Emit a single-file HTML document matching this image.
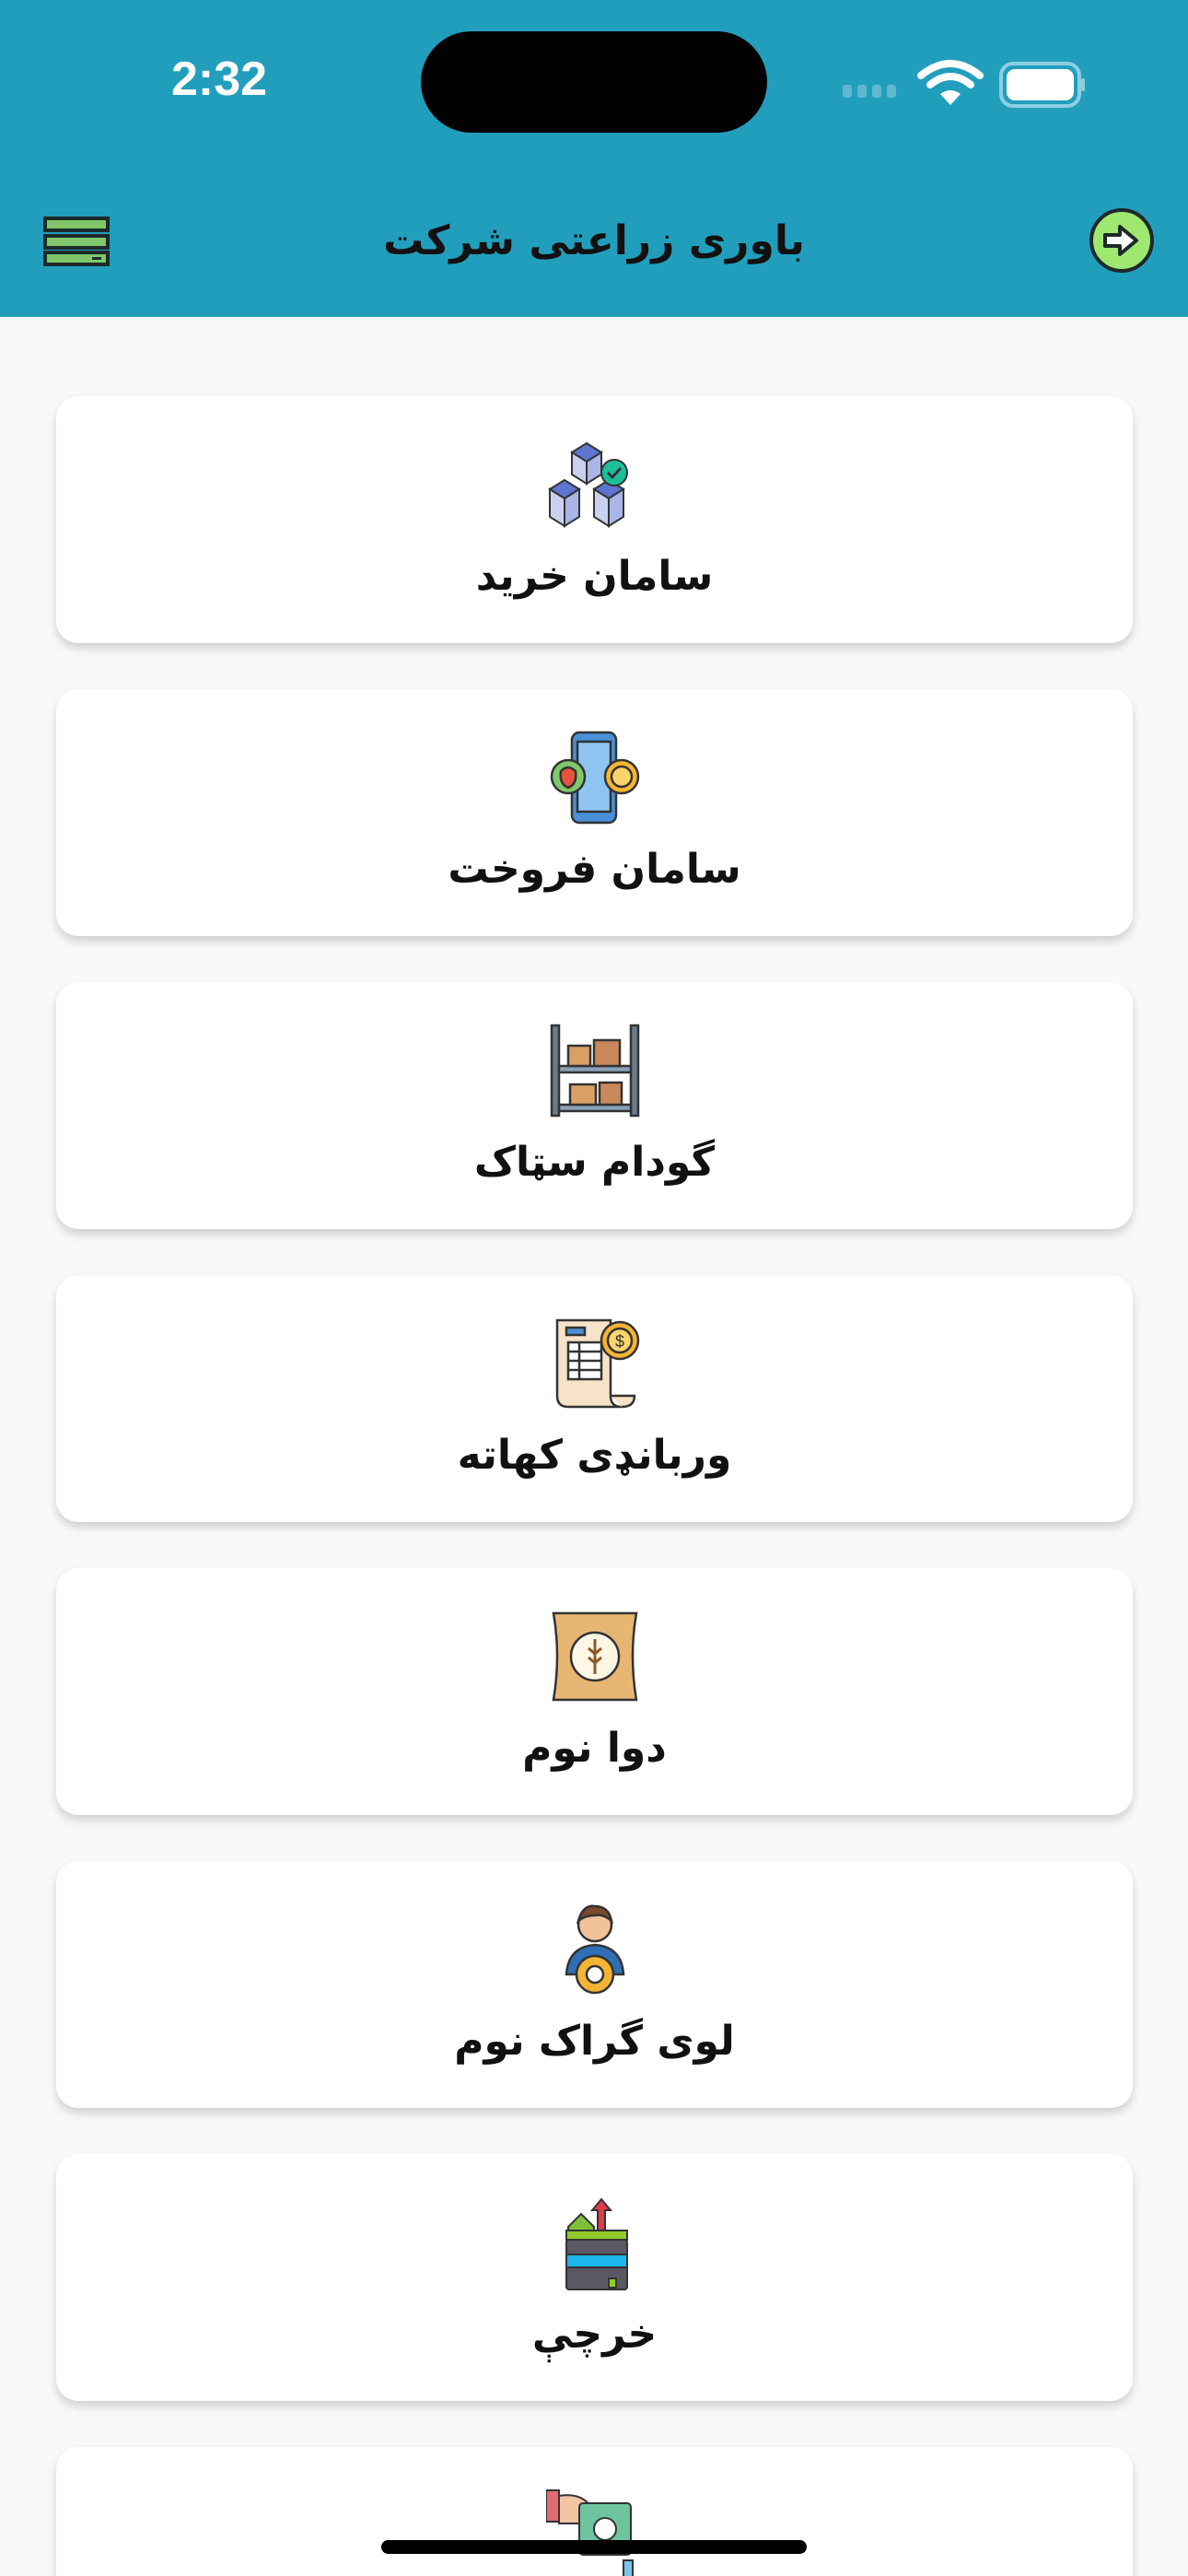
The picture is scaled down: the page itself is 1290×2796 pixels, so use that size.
<!DOCTYPE html>
<html style="width:1290px;height:2796px;overflow:hidden"><head><meta charset="utf-8">
<style>
*{margin:0;padding:0;box-sizing:border-box}
body{width:1290px;height:2796px;overflow:hidden;background:#f8f9fb;font-family:"DejaVu Sans","Liberation Sans",sans-serif;position:relative}
.hdr{position:absolute;left:0;top:0;width:1290px;height:344px;background:#229ebd}
.time{position:absolute;left:186px;top:56px;font-family:"Liberation Sans",sans-serif;font-weight:bold;font-size:52px;color:#fff}
.island{position:absolute;left:457px;top:34px;width:376px;height:110px;border-radius:55px;background:#000}
.title{position:absolute;left:0;width:1290px;top:236px;text-align:center;font-size:44px;font-weight:bold;color:#111;direction:rtl}
.card{position:absolute;left:61px;width:1169px;height:268px;background:#fff;border-radius:24px;box-shadow:0 6px 10px rgba(0,0,0,.16);overflow:hidden}
.card svg{position:absolute;left:532px;top:43px}
.card .lbl{position:absolute;left:0;right:0;top:170px;text-align:center;font-size:44px;font-weight:bold;color:#111;direction:rtl}
.home{position:absolute;left:414px;top:2757px;width:462px;height:15px;border-radius:8px;background:#000}
</style></head><body>
<div class="hdr">
<div class="time">2:32</div>
<div class="island"></div>
<svg style="position:absolute;left:910px;top:60px" width="270" height="60" viewBox="0 0 270 60">
<g fill="#5fb8d0"><rect x="5" y="32" width="10" height="14" rx="3"/><rect x="21" y="32" width="10" height="14" rx="3"/><rect x="37" y="32" width="10" height="14" rx="3"/><rect x="53" y="32" width="10" height="14" rx="3"/></g>
<g fill="none" stroke="#fff" stroke-width="8" stroke-linecap="round"><path d="M90 22 Q122 -4 154 22"/><path d="M100 32 Q122 14 144 32"/></g>
<path d="M111 42 Q122 34 133 42 L122 54Z" fill="#fff"/>
<rect x="177" y="9" width="85" height="46" rx="13" fill="none" stroke="#8ccfe0" stroke-width="4"/>
<rect x="183" y="15" width="73" height="34" rx="9" fill="#fff"/>
<rect x="264" y="25" width="4" height="14" rx="2" fill="#8ccfe0"/>
</svg>
<svg style="position:absolute;left:46px;top:234px" width="76" height="56" viewBox="0 0 76 56">
<g fill="#7fc76a" stroke="#1d2a2a" stroke-width="4"><rect x="3" y="3" width="68" height="13"/><rect x="3" y="22" width="68" height="13"/><rect x="3" y="40" width="68" height="13"/></g>
<rect x="54" y="45" width="10" height="3" fill="#1d2a2a"/>
</svg>
<div class="title">باوری زراعتی شرکت</div>
<svg style="position:absolute;left:1182px;top:224px" width="74" height="74" viewBox="0 0 74 74">
<circle cx="36" cy="37" r="33" fill="#9fe870" stroke="#1d2a2a" stroke-width="4"/>
<path d="M18 31 H34 V22 L52 37 L34 52 V43 H18Z" fill="#fff" stroke="#1d2a2a" stroke-width="4" stroke-linejoin="round"/>
</svg>
</div>

<div class="card" style="top:430px">
<svg width="106" height="106" viewBox="0 0 106 106"><g stroke="#333" stroke-width="2"><path d="M28 18 L44 8 L60 18 L44 28Z" fill="#5d74d2"/><path d="M28 18 V42 L44 52 V28Z" fill="#c9d0f0"/><path d="M60 18 V42 L44 52 V28Z" fill="#aab4e6"/><path d="M4 58 L20 48 L36 58 L20 68Z" fill="#5d74d2"/><path d="M4 58 V88 L20 98 V68Z" fill="#c9d0f0"/><path d="M36 58 V88 L20 98 V68Z" fill="#aab4e6"/><path d="M52 58 L68 48 L84 58 L68 68Z" fill="#5d74d2"/><path d="M52 58 V88 L68 98 V68Z" fill="#c9d0f0"/><path d="M84 58 V88 L68 98 V68Z" fill="#aab4e6"/><circle cx="74" cy="40" r="14" fill="#1bbf9a"/><path d="M67 40 L72 45 L81 35" fill="none" stroke-width="3"/></g></svg>
<div class="lbl">سامان خرید</div></div>

<div class="card" style="top:748px">
<svg width="106" height="106" viewBox="0 0 106 106"><g stroke="#333" stroke-width="2.5"><rect x="28" y="4" width="48" height="98" rx="8" fill="#4a90d9"/><rect x="34" y="14" width="36" height="76" fill="#8ec5f0"/><circle cx="24" cy="52" r="18" fill="#7fc96b"/><path d="M16 46 Q24 38 32 46 Q34 60 24 64 Q14 60 16 46Z" fill="#e5533d"/><circle cx="82" cy="52" r="18" fill="#f5b534"/><circle cx="82" cy="52" r="11" fill="#fcd46a"/></g></svg>
<div class="lbl">سامان فروخت</div></div>

<div class="card" style="top:1066px">
<svg width="106" height="106" viewBox="0 0 106 106"><g stroke="#333" stroke-width="2.5"><rect x="6" y="4" width="8" height="98" fill="#6b7b8c"/><rect x="92" y="4" width="8" height="98" fill="#6b7b8c"/><rect x="14" y="48" width="78" height="7" fill="#8aa0b6"/><rect x="14" y="90" width="78" height="7" fill="#8aa0b6"/><rect x="24" y="26" width="24" height="22" fill="#d9a066"/><rect x="52" y="20" width="28" height="28" fill="#c9895a"/><rect x="26" y="68" width="28" height="22" fill="#d9a066"/><rect x="58" y="66" width="24" height="24" fill="#c9895a"/></g></svg>
<div class="lbl">گودام سټاک</div></div>

<div class="card" style="top:1384px">
<svg width="106" height="106" viewBox="0 0 106 106"><g stroke="#333" stroke-width="2.5"><path d="M12 6 H70 V88 Q70 100 82 100 H24 Q12 100 12 88Z" fill="#f6e3c8"/><rect x="24" y="30" width="36" height="40" fill="#fff"/><path d="M24 40 H60 M24 50 H60 M24 60 H60 M36 30 V70" fill="none"/><rect x="22" y="14" width="20" height="8" fill="#4a90d9"/><path d="M70 88 H96 Q96 100 82 100" fill="#f6e3c8"/><circle cx="80" cy="28" r="20" fill="#f5b534"/><circle cx="80" cy="28" r="13" fill="#fcd46a"/></g><text x="80" y="35" font-size="18" text-anchor="middle" fill="#333" font-family="Liberation Sans">$</text></svg>
<div class="lbl">وربانډی کهاته</div></div>

<div class="card" style="top:1702px">
<svg width="106" height="106" viewBox="0 0 106 106"><g stroke="#333" stroke-width="2.5"><path d="M8 6 H98 Q90 52 98 100 H8 Q16 52 8 6Z" fill="#e8b673"/><circle cx="53" cy="53" r="26" fill="#fff7e6"/><path d="M53 34 V72 M46 44 L53 50 L60 44 M46 54 L53 60 L60 54" fill="none" stroke="#8a5a2b" stroke-width="3"/></g></svg>
<div class="lbl">دوا نوم</div></div>

<div class="card" style="top:2020px">
<svg width="106" height="106" viewBox="0 0 106 106"><g stroke="#333" stroke-width="2.5"><circle cx="53" cy="26" r="18" fill="#f2c29b"/><path d="M35 22 Q40 4 53 6 Q68 6 71 22 Q62 14 53 16 Q42 16 35 22Z" fill="#7a4a2a"/><path d="M22 80 Q24 50 53 48 Q82 50 84 80Z" fill="#2f6fb5"/><circle cx="53" cy="80" r="20" fill="#f5b534"/><circle cx="53" cy="80" r="9" fill="#fff"/></g></svg>
<div class="lbl">لوی گراک نوم</div></div>

<div class="card" style="top:2338px">
<svg width="106" height="106" viewBox="0 0 106 106"><g stroke="#333" stroke-width="2"><path d="M60 6 L70 18 H64 V40 H56 V18 H50Z" fill="#e03a4a"/><path d="M24 36 L38 22 L52 36 V42 H24Z" fill="#7fc03a"/><rect x="22" y="40" width="66" height="10" fill="#8fcc2a"/><rect x="22" y="50" width="66" height="54" rx="3" fill="#5b5864"/><rect x="22" y="66" width="66" height="14" fill="#1bb6ea"/><rect x="68" y="92" width="8" height="10" fill="#8fcc2a"/></g></svg>
<div class="lbl">خرچې</div></div>

<div class="card" style="top:2656px;height:140px;border-radius:24px 24px 0 0">
<svg width="106" height="106" viewBox="0 0 106 106"><g stroke="#333" stroke-width="2"><rect x="0" y="4" width="14" height="34" fill="#e36a72"/><path d="M14 10 Q40 6 50 24 L46 40 H14Z" fill="#f3c3a3"/><rect x="36" y="18" width="56" height="56" rx="4" fill="#6fc4a0"/><circle cx="64" cy="46" r="12" fill="#fff"/><rect x="84" y="80" width="10" height="30" fill="#7ac6ea"/></g></svg>
</div>

<div class="home"></div>
</body></html>
